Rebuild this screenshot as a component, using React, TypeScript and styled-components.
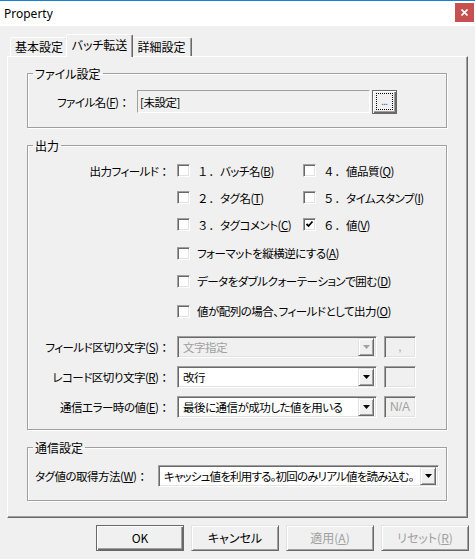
import React from 'react'
import styled, { createGlobalStyle, css } from 'styled-components'

const GlobalStyle = createGlobalStyle`
  html, body {
    margin: 0;
    padding: 0;
    background: #f0f0f0;
  }
  body {
    font-family: "Noto Sans CJK JP", "Noto Sans", sans-serif;
    font-size: 11.5px;
    letter-spacing: -0.5px;
    font-feature-settings: "palt";
    color: #000;
  }
`

const Window = styled.div`
  width: 475px;
  height: 559px;
  background: #f0f0f0;
  display: flex;
  flex-direction: column;
  overflow: hidden;
`

const TitleBar = styled.div`
  height: 25px;
  border-top: 1px solid #1a7fd6;
  background: #fff;
  display: flex;
  align-items: flex-start;
  justify-content: space-between;
`

const Title = styled.span`
  font-family: "Noto Sans", "Liberation Sans", sans-serif;
  font-size: 12px;
  letter-spacing: 0;
  line-height: 25px;
  padding-left: 4px;
`

const CloseButton = styled.div`
  width: 19px;
  height: 19px;
  margin: 2px 1px 0 0;
  background: #c75050;
  display: flex;
  align-items: center;
  justify-content: center;
`

const Wide = styled.span`
  font-feature-settings: normal;
  letter-spacing: 0;
`

const TabStrip = styled.div`
  display: flex;
  align-items: flex-end;
  height: 23px;
  margin: 8px 0 -1px 7px;
  padding-left: 3px;
`

const Tab = styled.div<{ $active?: boolean; $w: number }>`
  box-sizing: border-box;
  width: ${p => p.$w}px;
  height: 19px;
  margin-bottom: 1px;
  border: 1px solid #fff;
  border-bottom: none;
  border-right-color: #696969;
  border-radius: 2px 2px 0 0;
  box-shadow: inset -1px 0 #a0a0a0;
  background: #f0f0f0;
  display: flex;
  align-items: center;
  justify-content: center;
  font-size: 12px;
  letter-spacing: 0;
  line-height: 14px;
  white-space: nowrap;
  ${p =>
    p.$active &&
    css`
      position: relative;
      z-index: 1;
      height: 23px;
      margin: 0 -2px;
      padding-bottom: 3px;
    `}
`

const Panel = styled.div`
  box-sizing: border-box;
  height: 462px;
  margin: 0 7px;
  border: 1px solid;
  border-color: #fff #696969 #696969 #fff;
  box-shadow: inset -1px -1px #a0a0a0;
  padding: 9px 20px 0 19px;
  display: flex;
  flex-direction: column;
  gap: 10px;
`

const Group = styled.fieldset<{ $pt: number; $pb: number }>`
  margin: 0;
  padding: ${p => p.$pt}px 0 ${p => p.$pb}px 0;
  border: 1px solid #a0a0a0;
  box-shadow: 1px 1px #fff, inset 1px 1px #fff;
  min-width: 0;
`

const Legend = styled.legend`
  margin-left: 5px;
  padding: 0 2px;
  line-height: 15px;
  font-size: 12px;
  letter-spacing: 0;
`

const Row = styled.div`
  display: flex;
  align-items: center;
`

const FieldLabel = styled.span<{ $w: number; $left?: boolean }>`
  box-sizing: border-box;
  flex-shrink: 0;
  width: ${p => p.$w}px;
  padding: ${p => (p.$left ? '0 0 0 7px' : '0 7px 0 0')};
  text-align: ${p => (p.$left ? 'left' : 'right')};
  white-space: nowrap;
  line-height: 14px;
`

const sunken = css`
  box-sizing: border-box;
  border: 1px solid;
  border-color: #a0a0a0 #fff #fff #a0a0a0;
  box-shadow: inset 1px 1px #696969, inset -1px -1px #e3e3e3;
`

const TextBox = styled.div`
  box-sizing: border-box;
  width: 233px;
  height: 23px;
  border: 1px solid;
  border-color: #a0a0a0 #fff #fff #a0a0a0;
  padding-left: 2px;
  display: flex;
  align-items: center;
  line-height: 14px;
`

const FileRow = styled.div`
  display: flex;
  align-items: flex-start;
  gap: 2px;
  & > ${FieldLabel} {
    align-self: center;
    margin-right: -2px;
  }
`

const BrowseButton = styled.div`
  box-sizing: border-box;
  width: 25px;
  height: 24px;
  border: 1px solid #696969;
  background: #f0f0f0;
  box-shadow: inset 1px 1px #fff, inset -1px -1px #696969, inset -2px -2px #a0a0a0;
  display: flex;
  align-items: center;
  justify-content: center;
`

const FocusRing = styled.span`
  box-sizing: border-box;
  width: 17px;
  height: 17px;
  margin: 0 1px 1px 0;
  border: 1px dotted #000;
  display: flex;
  align-items: flex-end;
  justify-content: center;
  font-family: "Liberation Sans", sans-serif;
  font-size: 11px;
  line-height: 11px;
  letter-spacing: -1px;
  color: #2a5aa8;
  padding-bottom: 2px;
`

const FieldGrid = styled.div`
  display: grid;
  grid-template-columns: 149px 126px 1fr;
  grid-auto-rows: 27px;
  align-items: center;
`

const GridLabel = styled.span`
  text-align: right;
  padding-right: 7px;
  white-space: nowrap;
  line-height: 14px;
`

const CheckRow = styled.label<{ $h?: number; $mt?: number }>`
  display: flex;
  align-items: center;
  height: ${p => p.$h ?? 27}px;
  margin-top: ${p => p.$mt ?? 0}px;
  white-space: nowrap;
  line-height: 14px;
`

const OptionList = styled.div`
  display: flex;
  flex-direction: column;
  padding-left: 149px;
`

const Box = styled.span`
  ${sunken};
  flex-shrink: 0;
  width: 13px;
  height: 13px;
  margin-right: 7px;
  background: #fff;
  display: flex;
  align-items: center;
  justify-content: center;
`

const ComboList = styled.div`
  display: flex;
  flex-direction: column;
  gap: 8px;
  margin-top: 11px;
`

const ComboBox = styled.div<{ $w: number; $disabled?: boolean }>`
  ${sunken};
  flex-shrink: 0;
  width: ${p => p.$w}px;
  height: 22px;
  padding: 2px;
  background: ${p => (p.$disabled ? '#f0f0f0' : '#fff')};
  color: ${p => (p.$disabled ? '#a0a0a0' : '#000')};
  display: flex;
  align-items: center;
  white-space: nowrap;
`

const ComboText = styled.span<{ $tight?: boolean }>`
  flex: 1;
  min-width: 0;
  overflow: hidden;
  padding-left: 3px;
  line-height: 18px;
  letter-spacing: ${p => (p.$tight ? '-0.8px' : 'inherit')};
`

const ArrowButton = styled.span<{ $disabled?: boolean }>`
  box-sizing: border-box;
  flex-shrink: 0;
  width: 16px;
  height: 18px;
  border: 1px solid;
  border-color: #e3e3e3 #696969 #696969 #e3e3e3;
  box-shadow: inset 1px 1px #fff, inset -1px -1px #a0a0a0;
  background: #f0f0f0;
  display: flex;
  align-items: center;
  justify-content: center;
  color: ${p => (p.$disabled ? '#a0a0a0' : '#000')};
`

const ValueBox = styled.div`
  ${sunken};
  width: 32px;
  height: 22px;
  margin-left: 7px;
  background: #f0f0f0;
  color: #a0a0a0;
  display: flex;
  align-items: center;
  justify-content: center;
  font-family: "Liberation Sans", sans-serif;
  font-size: 12px;
  letter-spacing: 0;
`

const ButtonBar = styled.div`
  display: flex;
  justify-content: flex-end;
  gap: 7px;
  padding: 7px 6px 0 0;
`

const Button = styled.div<{ $default?: boolean; $disabled?: boolean }>`
  box-sizing: border-box;
  width: 88px;
  height: 26px;
  border: 1px solid;
  border-color: #e3e3e3 #696969 #696969 #e3e3e3;
  box-shadow: inset 1px 1px #fff, inset -1px -1px #a0a0a0;
  background: #f0f0f0;
  color: ${p => (p.$disabled ? '#a0a0a0' : '#000')};
  display: flex;
  align-items: center;
  justify-content: center;
  font-size: 12px;
  letter-spacing: 0;
  line-height: 14px;
  ${p =>
    p.$default &&
    css`
      border-color: #696969;
      box-shadow: inset 1px 1px #fff, inset -1px -1px #696969, inset -2px -2px #a0a0a0;
    `}
`

const Arrow = () => (
  <svg width="7" height="4" viewBox="0 0 7 4">
    <path d="M0 0h7L3.5 4z" fill="currentColor" />
  </svg>
)

const CheckMark = () => (
  <svg width="9" height="9" viewBox="0 0 9 9">
    <path d="M1.5 4l2 2 4-4.5" fill="none" stroke="#000" strokeWidth="1.8" />
  </svg>
)

type CheckProps = {
  checked?: boolean
  h?: number
  mt?: number
  children: React.ReactNode
}

const Check = ({ checked, h, mt, children }: CheckProps) => (
  <CheckRow $h={h} $mt={mt}>
    <Box>{checked && <CheckMark />}</Box>
    <span>{children}</span>
  </CheckRow>
)

type ComboProps = {
  w: number
  disabled?: boolean
  tight?: boolean
  children: React.ReactNode
}

const Combo = ({ w, disabled, tight, children }: ComboProps) => (
  <ComboBox $w={w} $disabled={disabled}>
    <ComboText $tight={tight}>{children}</ComboText>
    <ArrowButton $disabled={disabled}>
      <Arrow />
    </ArrowButton>
  </ComboBox>
)

const Colon = () => <Wide>：</Wide>

export default function App() {
  return (
    <Window>
      <GlobalStyle />
      <TitleBar>
        <Title>Property</Title>
        <CloseButton>
          <svg width="7" height="7" viewBox="0 0 7 7">
            <path d="M0.5 0.5l6 6M6.5 0.5l-6 6" stroke="#fff" strokeWidth="1.6" />
          </svg>
        </CloseButton>
      </TitleBar>

      <TabStrip>
        <Tab $w={58}>基本設定</Tab>
        <Tab $w={67} $active>
          バッチ転送
        </Tab>
        <Tab $w={61}>詳細設定</Tab>
      </TabStrip>

      <Panel>
        <Group $pt={9} $pb={13}>
          <Legend>ファイル設定</Legend>
          <FileRow>
            <FieldLabel $w={109}>
              ファイル名(<u>F</u>)<Colon />
            </FieldLabel>
            <TextBox>[未設定]</TextBox>
            <BrowseButton>
              <FocusRing>...</FocusRing>
            </BrowseButton>
          </FileRow>
        </Group>

        <Group $pt={4} $pb={11}>
          <Legend>出力</Legend>
          <FieldGrid>
            <GridLabel>
              出力フィールド<Colon />
            </GridLabel>
            <Check>
              <Wide>１．</Wide>バッチ名(<u>B</u>)
            </Check>
            <Check>
              <Wide>４．</Wide>値品質(<u>Q</u>)
            </Check>
            <span />
            <Check>
              <Wide>２．</Wide>タグ名(<u>T</u>)
            </Check>
            <Check>
              <Wide>５．</Wide>タイムスタンプ(<u>I</u>)
            </Check>
            <span />
            <Check>
              <Wide>３．</Wide>タグコメント(<u>C</u>)
            </Check>
            <Check checked>
              <Wide>６．</Wide>値(<u>V</u>)
            </Check>
          </FieldGrid>
          <OptionList>
            <Check h={28} mt={1}>
              フォーマットを縦横逆にする(<u>A</u>)
            </Check>
            <Check h={28}>
              データをダブルクォーテーションで囲む(<u>D</u>)
            </Check>
            <Check h={28} mt={2}>
              値が配列の場合、フィールドとして出力(<u>O</u>)
            </Check>
          </OptionList>
          <ComboList>
            <Row>
              <FieldLabel $w={149}>
                フィールド区切り文字(<u>S</u>)<Colon />
              </FieldLabel>
              <Combo w={200} disabled>
                文字指定
              </Combo>
              <ValueBox>,</ValueBox>
            </Row>
            <Row>
              <FieldLabel $w={149}>
                レコード区切り文字(<u>R</u>)<Colon />
              </FieldLabel>
              <Combo w={200}>改行</Combo>
              <ValueBox />
            </Row>
            <Row>
              <FieldLabel $w={149}>
                通信エラー時の値(<u>E</u>)<Colon />
              </FieldLabel>
              <Combo w={200}>最後に通信が成功した値を用いる</Combo>
              <ValueBox>N/A</ValueBox>
            </Row>
          </ComboList>
        </Group>

        <Group $pt={10} $pb={13}>
          <Legend>通信設定</Legend>
          <Row>
            <FieldLabel $w={130} $left>
              タグ値の取得方法(<u>W</u>)<Colon />
            </FieldLabel>
            <Combo w={281} tight>
              キャッシュ値を利用する。初回のみリアル値を読み込む。
            </Combo>
          </Row>
        </Group>
      </Panel>

      <ButtonBar>
        <Button $default>OK</Button>
        <Button>キャンセル</Button>
        <Button $disabled>
          適用(<u>A</u>)
        </Button>
        <Button $disabled>
          リセット(<u>R</u>)
        </Button>
      </ButtonBar>
    </Window>
  )
}
